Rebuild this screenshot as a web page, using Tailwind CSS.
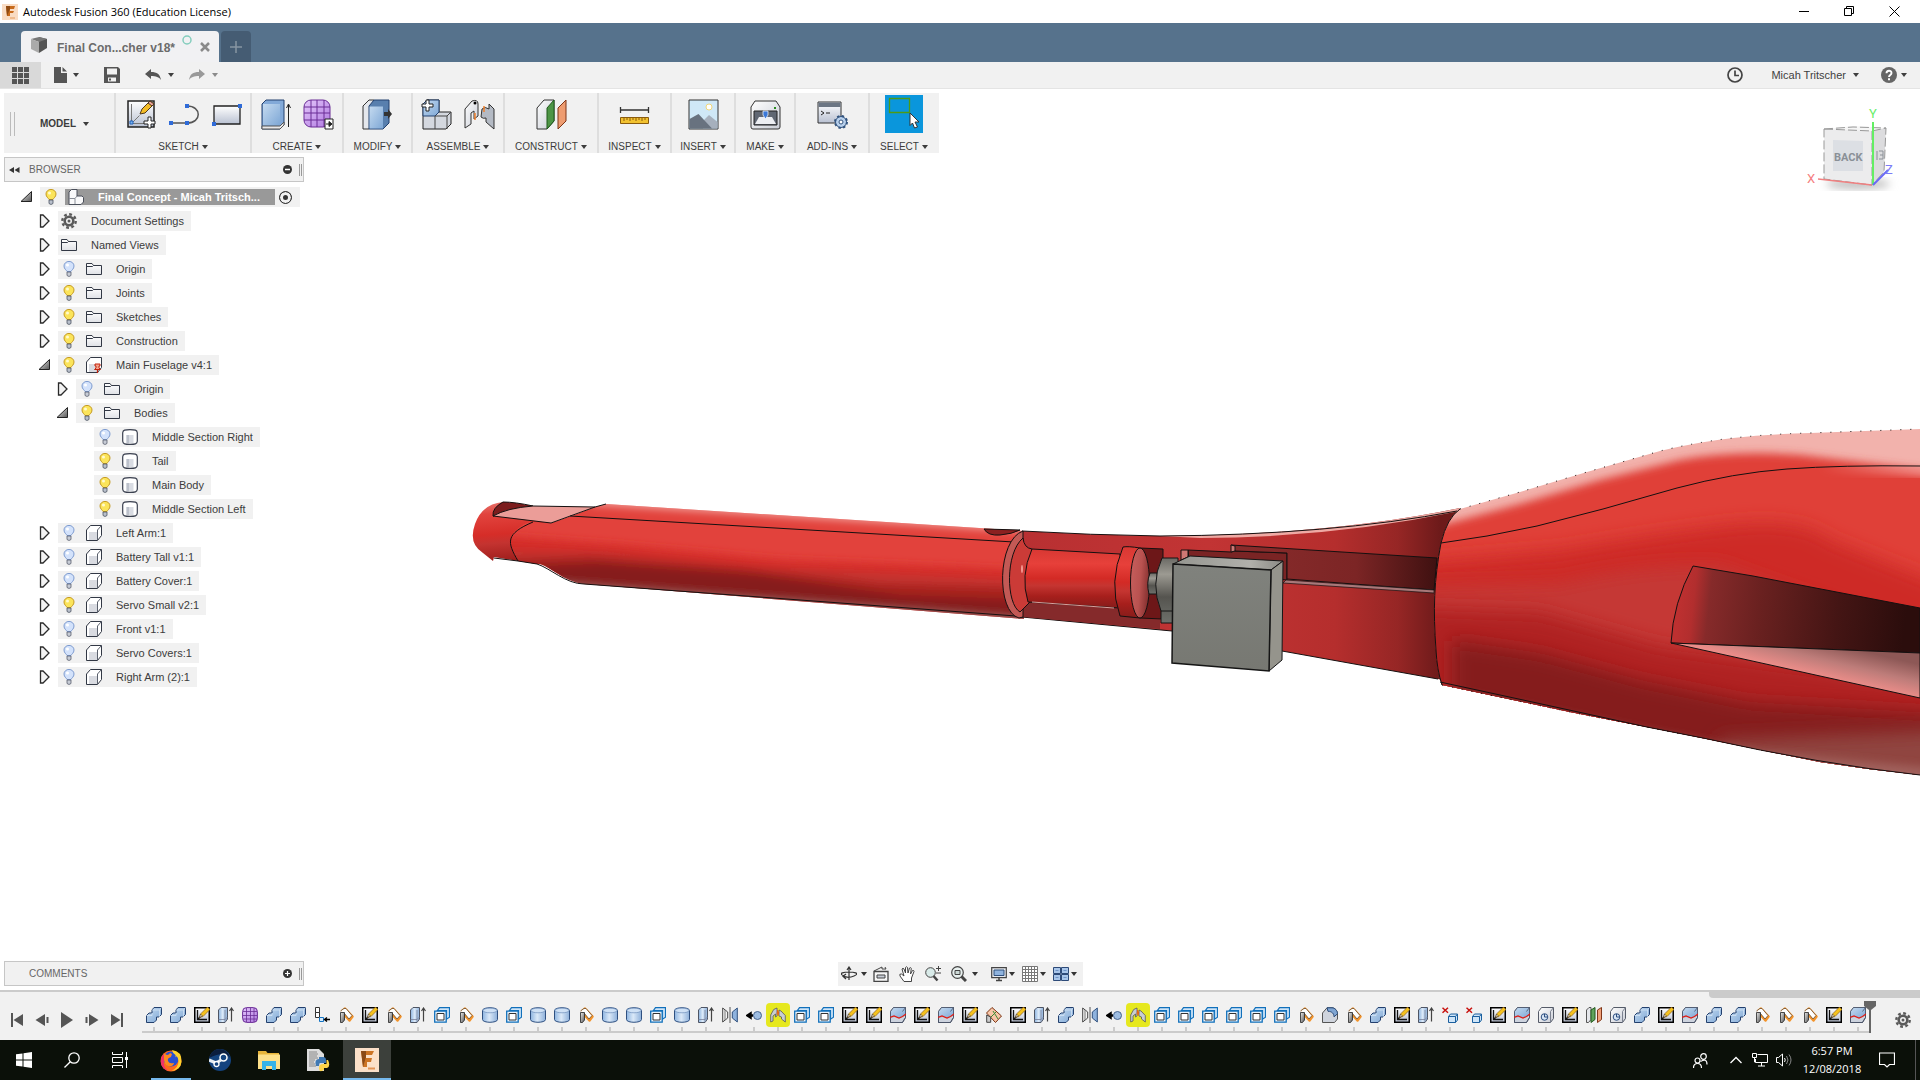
<!DOCTYPE html>
<html lang="en">
<head>
<meta charset="utf-8">
<title>Autodesk Fusion 360 (Education License)</title>
<script src="https://cdn.jsdelivr.net/npm/@tailwindcss/browser@4"></script>
</head>
<body class="flex h-screen flex-col overflow-hidden bg-white font-['Liberation_Sans',sans-serif] text-[11px] text-[#3c3c3c]">

<!-- Shared gradients and icon symbols -->
<svg class="absolute size-0" aria-hidden="true">
  <defs>
    <linearGradient id="blue" x1="0" y1="0" x2="1" y2="1"><stop offset="0" stop-color="#c4daf0"/><stop offset="1" stop-color="#7fa8d6"/></linearGradient>
    <linearGradient id="cyl"><stop offset="0" stop-color="#8db4e0"/><stop offset=".45" stop-color="#dbe9f8"/><stop offset="1" stop-color="#8db0da"/></linearGradient>
    <linearGradient id="grey" x1="0" y1="0" x2="1" y2="1"><stop offset="0" stop-color="#ffffff"/><stop offset="1" stop-color="#c9cdd6"/></linearGradient>
    <linearGradient id="sheet" x1="0" y1="0" x2="0" y2="1"><stop offset="0" stop-color="#ffffff"/><stop offset="1" stop-color="#b9c1d2"/></linearGradient>
    <linearGradient id="folder" x1="0" y1="0" x2="0" y2="1"><stop offset="0" stop-color="#ffffff"/><stop offset="1" stop-color="#dfe1e6"/></linearGradient>
    <linearGradient id="purp" x1="0" y1="0" x2="1" y2="1"><stop offset="0" stop-color="#e3c6fb"/><stop offset="1" stop-color="#b07ae0"/></linearGradient>
    <linearGradient id="dark" x1="0" y1="0" x2="1" y2="1"><stop offset="0" stop-color="#eee"/><stop offset="1" stop-color="#555"/></linearGradient>
  </defs>
  <symbol id="i-combine" viewBox="0 0 16 16"><path d="M6 3l2-2.500h7.500v7L13 10h-2.500v3L8 15.500H.5V8.500L3 6h3z" fill="url(#blue)" stroke="#23406e"/><path d="M6 3h7.500v7M.5 8.500H6V6M13.500 3l2-2.500" fill="none" stroke="#e3eefa" opacity=".6"/></symbol>
  <symbol id="i-sketch" viewBox="0 0 16 16"><path d="M.75.75h14.500v14.500H.75z" fill="url(#sheet)" stroke="#000" stroke-width="1.500"/><path d="M3.500 3v9.500H13M3.500 12.500L7 9" fill="none" stroke="#111" stroke-width="1.300"/><path d="M5.500 10.500l1-3.500 7-7L16 2.500l-7 7z" fill="#f5c21e" stroke="#7a4c10" stroke-width=".6"/><path d="M5.500 10.500l1-3.500 2 2z" fill="#f6dfb8" stroke="#222" stroke-width=".5"/></symbol>
  <symbol id="i-extrude" viewBox="0 0 16 16"><path d="M.5 3L3 .5h6.500V12L7 15.500H.5z" fill="url(#cyl)" stroke="#4e5564"/><path d="M.5 12.500H7L9.500 10M7 3v12" stroke="#77809a" fill="none" stroke-width=".8"/><path d="M13.500 14.500V2M11.500 4l2-3 2 3" fill="none" stroke="#444" stroke-width="1.200"/></symbol>
  <symbol id="i-tspline" viewBox="0 0 16 16"><rect x=".6" y=".6" width="14.800" height="14.800" rx="4" fill="url(#purp)" stroke="#6a2d96"/><path d="M1 4.500h14M1 8.500h14M1 12h14M4.500 1v14M8.500 1v14M12 1v14" stroke="#6a2d96" stroke-width=".8"/></symbol>
  <symbol id="i-align" viewBox="0 0 16 16"><path d="M1.500.5h4v5h-4zM1.500 5.500h4v5h-4z" fill="#fff" stroke="#333"/><path d="M5.500 10.500h4v4h-4z" fill="#d5eafc" stroke="#1474c4"/><path d="M11 12.500h5M13 10.500l-2.500 2 2.500 2" stroke="#000" stroke-width="1.400" fill="none"/></symbol>
  <symbol id="i-sweep" viewBox="0 0 16 16"><path d="M3.500 4.500L7 1.500l7.500 8-3 4-5-5.500" fill="none" stroke="#f3932a" stroke-width="2.500" stroke-linejoin="round"/><path d="M2.500 4L6 1.500h2l6 7-3 3.500-4.500-5.500" fill="#fff" stroke="#6b4a28" stroke-width=".8"/><path d="M2.500 5.500h4v7.500l-2 2.500H2.500z" fill="url(#dark)" stroke="#222" stroke-width=".8"/></symbol>
  <symbol id="i-pattern" viewBox="0 0 16 16"><path d="M5.500.7h10v9.500l-3 2V3.500h-9z" fill="#cfe5f8" stroke="#1170bb" stroke-width="1.200"/><path d="M.7 4.200h11.500v11H.7z" fill="#e8f3fd" stroke="#1170bb" stroke-width="1.300"/><path d="M3 6.500h7v6.500H3z" fill="#fff" stroke="#333"/></symbol>
  <symbol id="i-cyl" viewBox="0 0 16 16"><path d="M.5 3.500C.5-.2 15.500-.2 15.500 3.500v9c0 3.700-15 3.700-15 0z" fill="url(#cyl)" stroke="#2f5080"/><ellipse cx="8" cy="3.500" rx="7" ry="2.300" fill="#cfe1f5" stroke="#5c80b0" stroke-width=".6"/></symbol>
  <symbol id="i-mirror" viewBox="0 0 16 16"><path d="M.7 1l5 4v6l-5 4z" fill="#f4f4f4" stroke="#444"/><path d="M3 3v10" stroke="#777"/><path d="M15.300 1l-5 4v6l5 4z" fill="#8fb3de" stroke="#31527f"/><path d="M8 0v16" stroke="#555"/></symbol>
  <symbol id="i-rigid" viewBox="0 0 16 16"><path d="M7 8.500H3M4.500 6.500L1.500 8.500l3 2z" stroke="#000" stroke-width="2.500" fill="#000"/><circle cx="11.500" cy="8.500" r="4" fill="#9dbde3" stroke="#46648e"/></symbol>
  <symbol id="i-joint" viewBox="0 0 16 16"><path d="M.7 8l3-5.500L7 1v8l-1.500 1V7L3 9v5l-2.300 1z" fill="#c9cdd2" stroke="#55585e" stroke-width=".8"/><path d="M9 3l2 1 4.300 4.500V15L11.500 12V10L9 9z" fill="#c9cdd2" stroke="#55585e" stroke-width=".8"/><path d="M7.700 3l-.7 4.500M8.700 4.500l-.7 4" stroke="#ee5a10"/></symbol>
  <symbol id="i-split" viewBox="0 0 16 16"><path d="M.5 4.500l3-4h12v10l-3 5H.5z" fill="#cdd3de" stroke="#4a5367"/><path d="M.5 4.500l3-4h12v7L12.500 10l-4 1-3-1-5 1z" fill="url(#blue)"/><path d="M.5 4.500l3-4h12v10l-3 5H.5zM12.500 4.500l3-4" fill="none" stroke="#4a5367" stroke-width=".8"/><path d="M0 10.500l4-1.500 5 2 3.500-1.500L16 7" fill="none" stroke="#e21a10" stroke-width="1.200"/></symbol>
  <symbol id="i-fold" viewBox="0 0 16 16"><path d="M.5 6L6 .5 15.500 9l-6 6.500z" fill="#f8c6a8" stroke="#7a3312"/><path d="M.7 8l4 2v5.300h-4z" fill="#ccc" stroke="#444"/><path d="M5 10l5-5M7 4l5 8" stroke="#3c8a34"/></symbol>
  <symbol id="i-fillet" viewBox="0 0 16 16"><path d="M.5 6L5 .8h5c3 0 5.500 3 5.500 6V12l-3 3.500H.5z" fill="#cfd4dd" stroke="#555"/><path d="M5 .8h5c3 0 5.500 3 5.500 6l-3.500 3c0-3-2-5.500-6-5.500z" fill="#7fa5d3" stroke="#2a4a78"/></symbol>
  <symbol id="i-delete" viewBox="0 0 16 16"><path d="M.5.7l5.500 5M6 .7l-5.500 5" stroke="#c8120f" stroke-width="1.500"/><path d="M6.500 9.500l2-2.500h7v6l-2 2.500h-7z" fill="#cfe5f8" stroke="#1a5f9e"/><path d="M6.500 9.500h7v6M13.500 9.500l2-2.500" fill="none" stroke="#1a5f9e"/></symbol>
  <symbol id="i-hole" viewBox="0 0 16 16"><path d="M.5 4.500l3-4h12v11l-3 4H.5z" fill="url(#grey)" stroke="#555b68"/><path d="M12.500 4.500v11M12.500 4.500l3-4" fill="none" stroke="#7c8290"/><circle cx="6.500" cy="10" r="3.300" fill="#d7e5f5" stroke="#2e4f80"/><path d="M6.500 10V7M6.500 10h3" stroke="#2e4f80"/></symbol>
  <symbol id="i-plane" viewBox="0 0 16 16"><path d="M.5 3L3 .5h2v12L2.500 15.500h-2z" fill="#e5e7eb" stroke="#555"/><path d="M5 3l4-2.500v12L5 15.500z" fill="#5fa35a" stroke="#225a1e"/><path d="M11.500 3l4-2.500v12l-4 3z" fill="#f0a17a" stroke="#7f3517"/></symbol>

  <symbol id="i-bulb-on" viewBox="0 0 12 16"><path d="M4 10.500C3.500 9 1 8 1 5a5 4.600 0 0 1 10 0c0 3-2.500 4-3 5.500z" fill="#fbe45a" stroke="#c59a22"/><circle cx="4.500" cy="4" r="1.500" fill="#fffbd0"/><path d="M4 11h4v3.500L6 15.500 4 14.500z" fill="#b9c0cc" stroke="#4d5462" stroke-width=".8"/></symbol>
  <symbol id="i-bulb-off" viewBox="0 0 12 16"><path d="M4 10.500C3.500 9 1 8 1 5a5 4.600 0 0 1 10 0c0 3-2.500 4-3 5.500z" fill="#d3e2fb" stroke="#7d9bd0"/><circle cx="4.500" cy="4" r="1.500" fill="#fff"/><path d="M4 11h4v3.500L6 15.500 4 14.500z" fill="#c7ccd6" stroke="#5a6170" stroke-width=".8"/></symbol>
  <symbol id="i-folder" viewBox="0 0 16 16"><path d="M.5 13.500v-11h5.500l1.500 2h8v9z" fill="url(#folder)" stroke="#323845"/><path d="M1 5.500h5.500L7.500 4.500" fill="none" stroke="#323845"/></symbol>
  <symbol id="i-gear" viewBox="0 0 16 16"><circle cx="8" cy="8" r="4.300" fill="none" stroke="#5a5a5a" stroke-width="2.600"/><circle cx="8" cy="8" r="6.700" fill="none" stroke="#5a5a5a" stroke-width="2.400" stroke-dasharray="2.800 2.460"/><circle cx="8" cy="8" r="1.500" fill="#5a5a5a"/></symbol>
  <symbol id="i-part" viewBox="0 0 16 16"><path d="M.5 15.500V5l4-4.500h11v10l-4 5z" fill="#fff" stroke="#323845"/><path d="M3 7h8v8H3z" fill="#d9dbe1"/><path d="M11.500 5v10M11.500 5l4-4.500" fill="none" stroke="#5a606c"/></symbol>
  <symbol id="i-pinned" viewBox="0 0 16 16"><path d="M.5 15.500V5l4-4.500h11v10l-4 5z" fill="#fff" stroke="#323845"/><path d="M3 7h8v8H3z" fill="#d9dbe1"/><path d="M9 7h5v2h-1v2l1.500 1.500h-6L10 11V9H9z" fill="#f4a48c" stroke="#c3240f"/><path d="M11.500 12.500V16" stroke="#c3240f" stroke-width="1.300"/></symbol>
  <symbol id="i-body" viewBox="0 0 16 16"><path d="M.7 3.700C1 1 3 .7 8 .7s7 .3 7.300 3v8.600c-.3 2.700-2.300 3-7.300 3s-7-.3-7.300-3z" fill="#fff" stroke="#3b4150" stroke-width="1.200"/><path d="M4.500 6h7v8h-7z" fill="#d9dce3"/><path d="M4.500 6h2.500v8H4.500z" fill="#bcc1cb"/></symbol>
  <symbol id="i-asm" viewBox="0 0 16 16"><path d="M1 15V3l2.500-2.500H9V7h5l1.500 1.500V13L13 15.500H1z" fill="#f9f9fa" stroke="#4a4f5a"/><path d="M7 15V9.500L9 7M1 9.500h6" fill="none" stroke="#8a8f98"/></symbol>
  <symbol id="i-closed" viewBox="0 0 14 16"><path d="M3.500 2H6l6 6-6 6H3.500z" fill="#f3f3f3" stroke="#2a2a2a" stroke-width="1.300"/></symbol>
  <symbol id="i-open" viewBox="0 0 14 16"><path d="M12.500 2.500v10H2z" fill="url(#dark)" stroke="#222"/></symbol>
  <symbol id="i-caret" viewBox="0 0 6 4"><path d="M0 0h6L3 4z" fill="currentColor"/></symbol>
</svg>

<!-- Window title bar -->
<header class="flex h-[23px] shrink-0 items-center bg-white pr-[3px] text-black">
  <svg class="ml-[2px] size-4" viewBox="0 0 16 16"><path d="M0 0h16v16H0z" fill="#f9dcc4"/><path d="M4 2h9l-1 3H8v2h4l-1 2H8v3H5z" fill="#c76a1b"/><path d="M4 2h4v3L5 12z" fill="#8f4a12"/><path d="M8 14h5" stroke="#e59a5a"/></svg>
  <h1 class="ml-[5px] font-['Open_Sans',sans-serif] text-[11px] leading-4">Autodesk Fusion 360 (Education License)</h1>
  <div class="ml-auto flex">
    <button class="flex h-5 w-[45px] items-center justify-center" aria-label="Minimize"><svg class="size-[11px]" viewBox="0 0 11 11"><path d="M0 5.500h10" stroke="#000"/></svg></button>
    <button class="flex h-5 w-[45px] items-center justify-center" aria-label="Restore"><svg class="size-[11px]" viewBox="0 0 11 11"><path d="M.5 2.500h7v7h-7zM2.500 2.500v-2h7v7h-2" fill="none" stroke="#000"/></svg></button>
    <button class="flex h-5 w-[45px] items-center justify-center" aria-label="Close"><svg class="size-[11px]" viewBox="0 0 11 11"><path d="M.5.5l10 10M10.500.5l-10 10" stroke="#000"/></svg></button>
  </div>
</header>

<!-- Document tabs -->
<nav class="flex h-[39px] shrink-0 items-end gap-[2px] bg-[#56728c] pl-[21px]">
  <div class="flex h-[31px] w-[198px] items-center rounded-t bg-[#f1f1f3] pl-[10px]">
    <svg class="mb-1 size-4" viewBox="0 0 16 16"><path d="M8 0l8 2v9l-8 5z" fill="#555"/><path d="M0 2l8-2 8 2-8 3z" fill="#777"/><path d="M0 2l8 3v11L0 12z" fill="#aaa"/></svg>
    <a href="#" class="ml-[10px] pt-[2px] text-xs font-bold text-[#6b6b6b]">Final Con...cher v18*</a>
    <svg class="mb-[14px] ml-[7px] size-[10px]" viewBox="0 0 10 10"><circle cx="5" cy="5" r="4" fill="none" stroke="#84cdbd" stroke-width="1.500"/></svg>
    <button class="ml-auto mr-[9px]" aria-label="Close tab"><svg class="size-[10px]" viewBox="0 0 10 10"><path d="M1 1l8 8M9 1L1 9" stroke="#8a8a8a" stroke-width="2.500"/></svg></button>
  </div>
  <button class="flex h-[31px] w-[30px] items-center justify-center rounded-t bg-[#455c73]" aria-label="New tab"><svg class="size-3" viewBox="0 0 12 12"><path d="M6 0v12M0 6h12" stroke="#8795a3" stroke-width="1.500"/></svg></button>
</nav>

<!-- Quick access bar -->
<div class="flex h-[27px] shrink-0 items-center border-b border-[#e4e4e4] bg-[#f1f1f1] text-[#3f3f3f]">
  <button class="flex h-[26px] w-[41px] items-center justify-center bg-[#d9d9d9]" aria-label="Data panel"><svg class="size-[17px]" viewBox="0 0 17 17"><path d="M0 0h5v5H0zM6 0h5v5H6zM12 0h5v5h-5zM0 6h5v5H0zM6 6h5v5H6zM12 6h5v5h-5zM0 12h5v5H0zM6 12h5v5H6zM12 12h5v5h-5z" fill="#555"/></svg></button>
  <button class="ml-[13px] flex items-center gap-[6px]" aria-label="File"><svg class="h-4 w-[13px]" viewBox="0 0 13 16"><path d="M0 0h7v6h6v10H0zM8.500 0L13 4.500H8.500z" fill="#555"/></svg><svg class="h-1 w-[6px]"><use href="#i-caret"/></svg></button>
  <button class="ml-[25px]" aria-label="Save"><svg class="size-4" viewBox="0 0 16 16"><path d="M0 0h14l2 2v14H0z" fill="#555"/><path d="M3 1.500h10v6H3z" fill="#f1f1f1"/><path d="M4 10.500h8v4H4z" fill="#f1f1f1"/><path d="M5 11.500h2v2H5z" fill="#555"/></svg></button>
  <button class="ml-[25px] flex items-center gap-[7px]" aria-label="Undo"><svg class="h-3 w-4" viewBox="0 0 16 12"><path d="M0 5l6-5v3c6 0 9 2 10 8-2-3-5-4-10-4v3z" fill="#555"/></svg><svg class="h-1 w-[6px]"><use href="#i-caret"/></svg></button>
  <button class="ml-[15px] flex items-center gap-[7px] text-[#8a8a8a]" aria-label="Redo"><svg class="h-3 w-4" viewBox="0 0 16 12"><path d="M16 5l-6-5v3C4 3 1 5 0 11c2-3 5-4 10-4v3z" fill="#999"/></svg><svg class="h-1 w-[6px]"><use href="#i-caret"/></svg></button>
  <div class="ml-auto flex items-center pr-[13px]">
    <button aria-label="Job status"><svg class="size-4" viewBox="0 0 16 16"><circle cx="8" cy="8" r="7" fill="none" stroke="#444" stroke-width="1.700"/><path d="M8 3.500V8.500h4" fill="none" stroke="#444" stroke-width="1.700"/></svg></button>
    <button class="ml-7 flex items-center gap-[7px]">Micah Tritscher<svg class="h-1 w-[6px]"><use href="#i-caret"/></svg></button>
    <button class="ml-[22px] flex items-center gap-1" aria-label="Help"><svg class="size-4" viewBox="0 0 16 16"><circle cx="8" cy="8" r="8" fill="#666"/><path d="M5.500 6.200C5.500 3 10.500 3 10.500 6c0 2-2.500 1.800-2.500 4" fill="none" stroke="#fff" stroke-width="1.900"/><path d="M7 11.300h2v2H7z" fill="#fff"/></svg><svg class="h-1 w-[6px]"><use href="#i-caret"/></svg></button>
  </div>
</div>

<main class="relative flex min-h-0 flex-1 flex-col pl-1 pt-1">
  <!-- 3D viewport drawing -->
  <svg class="absolute inset-0 size-full" viewBox="0 89 1920 901" preserveAspectRatio="xMaxYMid slice" role="img" aria-label="Model viewport">
    <defs>
      <linearGradient id="nose" x1=".2" y1="0" x2=".3" y2="1"><stop offset="0" stop-color="#e6736c"/><stop offset=".2" stop-color="#e2443e"/><stop offset=".55" stop-color="#d62d28"/><stop offset=".7" stop-color="#c43330"/><stop offset="1" stop-color="#a01f1d"/></linearGradient>
      <linearGradient id="mid" gradientUnits="userSpaceOnUse" x1="1020" y1="0" x2="1440" y2="0"><stop offset="0" stop-color="#b83032"/><stop offset=".45" stop-color="#c23434"/><stop offset=".75" stop-color="#b52e2d"/><stop offset=".9" stop-color="#962625"/><stop offset="1" stop-color="#6d1a1a"/></linearGradient>
      <linearGradient id="slot" gradientUnits="userSpaceOnUse" x1="1230" y1="0" x2="1440" y2="0"><stop offset="0" stop-color="#8a2c2c"/><stop offset=".6" stop-color="#7c2525"/><stop offset="1" stop-color="#3d1010"/></linearGradient>
      <linearGradient id="rod" x1="0" y1="0" x2="0" y2="1"><stop offset="0" stop-color="#d83833"/><stop offset=".25" stop-color="#e7403a"/><stop offset=".5" stop-color="#d32a25"/><stop offset=".62" stop-color="#c53531"/><stop offset=".8" stop-color="#a71f1c"/><stop offset="1" stop-color="#861c1a"/></linearGradient>
      <linearGradient id="disk" x1="0" y1="0" x2="1" y2=".3"><stop offset="0" stop-color="#c8605e"/><stop offset=".6" stop-color="#b95250"/><stop offset="1" stop-color="#8b3433"/></linearGradient>
      <linearGradient id="metal" x1="0" y1="0" x2="0" y2="1"><stop offset="0" stop-color="#6b6a65"/><stop offset=".25" stop-color="#9c9a92"/><stop offset=".6" stop-color="#55544f"/><stop offset="1" stop-color="#6e706b"/></linearGradient>
      <linearGradient id="boxf" x1="0" y1="0" x2="0" y2="1"><stop offset="0" stop-color="#80827d"/><stop offset="1" stop-color="#777872"/></linearGradient>
      <linearGradient id="boxt"><stop offset="0" stop-color="#94958f"/><stop offset=".7" stop-color="#b1b0ab"/><stop offset="1" stop-color="#8a8a85"/></linearGradient>
      <linearGradient id="cut" gradientUnits="userSpaceOnUse" x1="1680" y1="600" x2="1905" y2="625"><stop offset="0" stop-color="#bd3030"/><stop offset=".06" stop-color="#b22e2e"/><stop offset=".13" stop-color="#862a2a"/><stop offset=".35" stop-color="#6a2120"/><stop offset=".7" stop-color="#441514"/><stop offset="1" stop-color="#2b0d0c"/></linearGradient>
      <linearGradient id="lip" gradientUnits="userSpaceOnUse" x1="1850" y1="648" x2="1842" y2="682"><stop offset="0" stop-color="#8d5856"/><stop offset=".5" stop-color="#bd7c79"/><stop offset="1" stop-color="#ee8e8a"/></linearGradient>
      <clipPath id="hull"><path d="M1460 509L1520 492 1587 472 1660 451Q1697 442 1733 438T1810 433L1920 429V775Q1870 770 1820 762L1687 735 1570 712 1442 685Q1437 670 1436 650C1433 610 1434 580 1441 543Q1447 518 1460 509z"/></clipPath>
      <clipPath id="tailc"><path d="M518 561Q505 541 515 531T533 522L551 523Q575 515 595 507L606 504 1024 531V619L584 584Q570 582 555 572T537 564z"/></clipPath>
      <filter id="b4" x="-20%" y="-20%" width="140%" height="140%"><feGaussianBlur stdDeviation="4"/></filter>
      <filter id="b9" x="-20%" y="-20%" width="140%" height="140%"><feGaussianBlur stdDeviation="9"/></filter>
    </defs>

    <!-- nose -->
    <path d="M503 502Q482 504 475 524T483 553L493 561 494 557 518 561 551 523 533 506z" fill="url(#nose)"/>
    <!-- tail body, shaded along its slope -->
    <g clip-path="url(#tailc)">
      <path d="M500 490H1030V640H500z" fill="#e2423c"/>
      <g filter="url(#b4)">
        <path d="M590 497L1040 526V532L590 504z" fill="#f6b8b2"/>
        <path d="M480 535L620 545 780 560 1040 571V660H480z" fill="#d42a25"/>
        <path d="M480 550L600 552 760 567 1040 581V660H480z" fill="#c43431"/>
        <path d="M480 560L590 556 740 567 880 583 1040 588V660H480z" fill="#a9211e"/>
        <path d="M530 566L600 563 760 575 900 595 1040 600V650H530z" fill="#861e1c"/>
        <path d="M560 583L1040 619V640H560z" fill="#a36360"/>
      </g>
    </g>
    <g fill="none" stroke="#151010" stroke-width="1">
      <path d="M493 516Q492 508 503 502 515 502 533 506L493 516z" fill="#7c1d1d"/>
      <path d="M493 516Q507 508 533 506L595 507 551 523z" fill="#eb9d98"/>
      <path d="M595 507L606 504M533 522C505 534 507 542 518 561M494 558L518 561 537 564C550 568 566 584 584 584L1016 616M570 516L1014 542"/>
    </g>
    <path d="M984 529Q988 536 1000 535T1020 530z" fill="#8b2020" stroke="#151010"/>

    <!-- mid section -->
    <path d="M1022 531Q1090 535 1160 536 1330 535 1460 508L1450 682 1438 679 1282 651 1172 631 1022 617z" fill="url(#mid)"/>
    <path d="M1160 536Q1330 535 1460 508V511Q1330 538 1200 538z" fill="#efaaa4"/>
    <path d="M1022 531Q1090 535 1160 536 1330 535 1457 511" fill="none" stroke="#151010"/>
    <path d="M1022 617L1172 631M1282 651L1438 679" stroke="#151010"/>
    <path d="M1023 600L1115 606 1140 618 1160 619V629L1023 617z" fill="#852a2b"/>
    <path d="M1140 548L1163 549V619L1140 618z" fill="#6d1718" stroke="#151010"/>
    <g stroke="#151010">
      <path d="M1188 550L1231 552 1235 551 1287 553V580L1190 570z" fill="#7a2424"/>
      <path d="M1231 545L1437 558 1434 590 1287 579V553L1235 551z" fill="url(#slot)"/>
      <path d="M1181 550H1188V557L1181 560zM1231 545L1235 546V551L1231 552z" fill="#d07875"/>
      <path d="M1286 580L1434 590V593L1283 583z" fill="#a97879" stroke-width=".7"/>
    </g>

    <!-- coupling ring, rod and disk -->
    <g stroke="#151010">
      <path d="M1023 531C997 540 996 612 1019 618L1023 617z" fill="#c35955"/>
      <path d="M1023 538C1005 553 1006 604 1020 612L1030 602 1032 549Q1024 548 1023 538z" fill="#cb3b37"/>
      <path d="M1032 549L1120 554V608L1028 602Q1020 576 1032 549z" fill="url(#rod)"/>
      <path d="M1123 547Q1128 546 1140 548V618L1120 616Q1108 582 1123 547z" fill="url(#rod)"/>
      <ellipse cx="1140" cy="583" rx="9.500" ry="35" fill="url(#disk)"/>
    </g>
    <path d="M1032 602L1114 608" stroke="#d9a09c"/>
    <ellipse cx="1022" cy="569" rx="1" ry="4" fill="#f59a94"/>

    <!-- servo -->
    <g stroke="#151515">
      <path d="M1150 573H1157V594H1149Q1146 583 1150 573z" fill="url(#metal)"/>
      <path d="M1162 558H1178V623H1161V611Q1150 584 1162 558z" fill="url(#metal)"/>
      <path d="M1161 611H1174" />
      <path d="M1173 564L1190 556 1283 561 1271 570z" fill="url(#boxt)"/>
      <path d="M1271 570L1283 561 1282 660 1269 671z" fill="#95948c"/>
      <path d="M1173 564L1271 570 1269 671 1172 663z" fill="url(#boxf)" stroke-width="1.500"/>
    </g>

    <!-- fuselage -->
    <g clip-path="url(#hull)">
      <path d="M1420 420H1920V790H1420z" fill="#f2b2ac"/>
      <path d="M1400 536L1520 504 1600 480 1680 460Q1733 450 1800 455L1960 474V820H1400z" fill="#e03f39" filter="url(#b4)"/>
      <path d="M1390 565L1560 550Q1640 536 1720 526T1830 540L1980 600V840H1390z" fill="#ce2925" filter="url(#b9)"/>
      <path d="M1390 588L1560 583Q1640 564 1720 566L1980 660V840H1390z" fill="#c53735" filter="url(#b9)"/>
      <path d="M1390 606L1540 612 1660 646 1980 690V850H1390z" fill="#b02220" filter="url(#b9)"/>
      <path d="M1452 640L1540 653 1640 680 1750 702 1980 716V850H1452z" fill="#851d1b" filter="url(#b9)"/>
      <path d="M1720 740L1980 728V850H1720z" fill="#904441" filter="url(#b9)"/>
      <path d="M1430 687L1640 730 1760 752 1980 772V850H1430z" fill="#a0605c" filter="url(#b4)"/>
      <path d="M1820 468H1940V476z" fill="#f59a95" filter="url(#b4)"/>
    </g>
    <g fill="none" stroke="#151010">
      <path d="M1460 509Q1447 518 1441 543C1434 580 1433 610 1436 650Q1437 670 1442 685"/>
      <path d="M1441 543L1487 536 1537 526 1603 509 1677 488Q1733 473 1787 469T1920 466"/>
      <path d="M1440 682L1537 703 1647 727 1703 738Q1820 764 1920 775"/>
      <path d="M1460 509L1520 492 1587 472 1660 451Q1697 442 1733 438T1810 433L1920 429M1442 685L1570 712 1687 735" stroke-dasharray="1 9"/>
      <path d="M1693 566L1753 576 1920 608V653L1671 643Q1673 603 1693 566z" fill="url(#cut)"/>
      <path d="M1671 643L1920 653V698L1820 676z" fill="url(#lip)"/>
    </g>

    <!-- view cube -->
    <ellipse cx="1858" cy="184" rx="32" ry="5" fill="#bbb" filter="url(#b4)"/>
    <path d="M1824 129L1853 126 1886 128 1872 131z" fill="#f6f6f6"/>
    <path d="M1824 129L1872 131V185L1824 179z" fill="#ececed"/>
    <path d="M1872 131L1886 128 1884 172 1872 185z" fill="#dcdcde"/>
    <path d="M1833 140L1863 141V171L1833 171z" fill="#dcdfe4"/>
    <path d="M1824 129L1872 131V185L1824 179zM1872 131L1886 128 1884 172 1872 185M1824 129L1853 127 1886 128" fill="none" stroke="#999" stroke-dasharray="9 3"/>
    <text x="1834" y="161" font-family="Roboto, sans-serif" font-size="11" font-weight="700" fill="#8a9097">BACK</text>
    <path d="M1877 151v9M1879 151h4v8h-4M1880 155h3" stroke="#8a9097" fill="none"/>
    <path d="M1818 179L1872 185" stroke="#f08080" stroke-width="1.500"/>
    <path d="M1873 185V122" stroke="#63ee63" stroke-width="2"/>
    <path d="M1873 185L1888 170" stroke="#6a6af5" stroke-width="2"/>
    <text x="1807" y="183" font-family="Roboto, sans-serif" font-size="13" fill="#f58080">X</text>
    <text x="1869" y="118" font-family="Roboto, sans-serif" font-size="13" fill="#6aee6a">Y</text>
    <text x="1885" y="174" font-family="Roboto, sans-serif" font-size="13" fill="#7c7cf8">Z</text>
  </svg>

  <!-- Tool ribbon -->
  <div class="relative flex h-[60px] w-[935px] shrink-0 bg-[#f1f1f1] text-[10px] leading-3">
    <div class="flex w-[110px] items-center pl-[6px] pt-[2px]">
      <div class="h-6 w-[5px] border-x border-[#bbb]"></div>
      <button class="ml-[25px] flex items-center gap-[7px] font-bold">MODEL<svg class="h-1 w-[6px]"><use href="#i-caret"/></svg></button>
    </div>
    <section class="flex w-[136px] flex-col items-center border-l-2 border-[#dedede]">
      <div class="flex h-[48px] w-full items-center justify-between pb-[6px] pl-[10px] pr-2">
        <svg class="size-[30px]" viewBox="0 0 30 30"><path d="M2 2h26v26H2z" fill="url(#sheet)" stroke="#222" stroke-width="1.500"/><path d="M5.500 5v19.500H20M5.500 24.500l8-8" fill="none" stroke="#777"/><path d="M4 22h3v3H4z" fill="#7db4ef" stroke="#2160b8"/><path d="M14 15l2-5 8-8 4 3-9 9z" fill="#f3bd27" stroke="#51381a"/><path d="M22 4l2-2 4 3-2 2z" fill="#e8a29a" stroke="#51381a"/><path d="M22 18h3v4h4v3h-4v4h-3v-4h-4v-3h4z" fill="#fff" stroke="#222"/></svg>
        <svg class="size-[30px]" viewBox="0 0 30 30"><path d="M2 24h16c15 0 15-17 0-17" fill="none" stroke="#555" stroke-width="1.500"/><path d="M0 22h4v4H0zM16 22h4v4h-4zM16 5h4v4h-4z" fill="#2f6bd8"/></svg>
        <svg class="size-[30px]" viewBox="0 0 30 30"><path d="M2 7h26v18H2z" fill="url(#sheet)" stroke="#222" stroke-width="1.300"/><path d="M0 23h4v4H0zM26 5h4v4h-4z" fill="#2f6bd8"/></svg>
      </div>
      <button class="flex items-center gap-[3px]">SKETCH<svg class="h-1 w-[6px]"><use href="#i-caret"/></svg></button>
    </section>
    <section class="flex w-[92px] flex-col items-center border-l-2 border-[#dedede]">
      <div class="flex h-[48px] w-full items-center justify-between pb-[6px] pl-[9px] pr-2">
        <svg class="size-[31px]" viewBox="0 0 31 31"><path d="M1 5l4-4h18v25l-4 4H1z" fill="#82a9d8" stroke="#23406e"/><path d="M2 5h17v21H2z" fill="url(#blue)"/><path d="M1 27h18l4-4v3l-4 4H1z" fill="#e8e8ea" stroke="#555"/><path d="M27.500 28V6M25.500 9l2-4 2 4" fill="none" stroke="#222"/></svg>
        <svg class="size-[31px]" viewBox="0 0 31 31"><rect x="1" y="1" width="26" height="27" rx="7" fill="url(#purp)" stroke="#6a2d96"/><path d="M1 8h26M1 14h26M1 21h26M8 1v27M14 1v27M21 1v27" stroke="#6a2d96"/><path d="M22 20h8v10h-8z" fill="#fff" stroke="#222"/><path d="M23 25h3M26 22.500l3 2.500-3 2.500z" stroke="#222" fill="#222"/></svg>
      </div>
      <button class="flex items-center gap-[3px]">CREATE<svg class="h-1 w-[6px]"><use href="#i-caret"/></svg></button>
    </section>
    <section class="flex w-[69px] flex-col items-center border-l-2 border-[#dedede]">
      <div class="flex h-[48px] items-center pb-[6px]"><svg class="size-[31px]" viewBox="0 0 31 31"><path d="M1 7l6-6h5v23l-5 6H1z" fill="#e4e7ec" stroke="#333"/><path d="M7 7l5-6h15v23l-6 6H7z" fill="#587fae" stroke="#23406e"/><path d="M7.500 7.500H21V29.500H7.500z" fill="url(#blue)"/><path d="M22 13h4v-3l4 5-4 5v-3h-4z" fill="#333"/></svg></div>
      <button class="flex items-center gap-[3px]">MODIFY<svg class="h-1 w-[6px]"><use href="#i-caret"/></svg></button>
    </section>
    <section class="flex w-[92px] flex-col items-center border-l-2 border-[#dedede]">
      <div class="flex h-[48px] w-full items-center justify-between pb-[6px] pl-2 pr-2">
        <svg class="size-[31px]" viewBox="0 0 31 31"><path d="M2 5l4-4h12v12h12v12l-5 5H2z" fill="#d4d8df" stroke="#222"/><path d="M2 5l4-4h12v12l-4 4H2z" fill="url(#blue)" stroke="#23406e"/><path d="M14 17v13M14 17h12l4-4M26 17v13" fill="none" stroke="#444"/><path d="M5 1h3v4h4v3H8v4H5V8H1V5h4z" fill="#fff" stroke="#222"/></svg>
        <svg class="size-[31px]" viewBox="0 0 31 31"><path d="M1 10l7-8q6-2 6 3v12l-4 3V12L7 14v11l-6 4z" fill="url(#grey)" stroke="#333"/><path d="M18 10q3-3 7 0L25 5l5 5v20l-8-7v-4q-3 1-5-1z" fill="#b4bac4" stroke="#333"/><path d="M11 14v7M20 7v6" stroke="#f1802b" stroke-width="1.500"/><circle cx="11" cy="4" r="1.500"/></svg>
      </div>
      <button class="flex items-center gap-[3px]">ASSEMBLE<svg class="h-1 w-[6px]"><use href="#i-caret"/></svg></button>
    </section>
    <section class="flex w-[94px] flex-col items-center border-l-2 border-[#dedede]">
      <div class="flex h-[48px] items-center pb-[6px]"><svg class="size-[31px]" viewBox="0 0 31 31"><path d="M1 9l7-8h10v21l-7 8H1z" fill="url(#grey)" stroke="#333"/><path d="M11 9l7-8v21l-7 8z" fill="#4d9546" stroke="#1f5a1b"/><path d="M22 9l8-8v21l-8 8z" fill="#ee9c70" stroke="#7f3517"/></svg></div>
      <button class="flex items-center gap-[3px]">CONSTRUCT<svg class="h-1 w-[6px]"><use href="#i-caret"/></svg></button>
    </section>
    <section class="flex w-[73px] flex-col items-center border-l-2 border-[#dedede]">
      <div class="flex h-[48px] items-center pb-[6px]"><svg class="size-[31px]" viewBox="0 0 31 31"><path d="M1.500 11h28M1.500 8v6M29.500 8v6" stroke="#333" stroke-width="1.300"/><path d="M1.500 18.500h28v6h-28z" fill="#f2c230" stroke="#8a5b0c"/><path d="M5 19v3M8 19v2M11 19v3M14 19v2M17 19v3M20 19v2M23 19v3M26 19v2" stroke="#8a5b0c"/></svg></div>
      <button class="flex items-center gap-[3px]">INSPECT<svg class="h-1 w-[6px]"><use href="#i-caret"/></svg></button>
    </section>
    <section class="flex w-[64px] flex-col items-center border-l-2 border-[#dedede]">
      <div class="flex h-[48px] items-center pb-[6px]"><svg class="size-[31px]" viewBox="0 0 31 31"><path d="M1 1h29v29H1z" fill="#cfe8f7" stroke="#333"/><circle cx="21" cy="8" r="3" fill="#fff" stroke="#f0d77a"/><path d="M15 22l6-6 8.500 7v6.500H15z" fill="#a6b0bd"/><path d="M1.500 20l9-5L24 29.500H1.500z" fill="#68727f"/></svg></div>
      <button class="flex items-center gap-[3px]">INSERT<svg class="h-1 w-[6px]"><use href="#i-caret"/></svg></button>
    </section>
    <section class="flex w-[60px] flex-col items-center border-l-2 border-[#dedede]">
      <div class="flex h-[48px] items-center pb-[6px]"><svg class="size-[31px]" viewBox="0 0 31 31"><path d="M1 8l4-6h21l4 6v20q0 2-2 2H3q-2 0-2-2z" fill="url(#grey)" stroke="#333"/><path d="M4 12h23v14H4z" fill="#606773" stroke="#222"/><path d="M9 18h13l4 7H5z" fill="#eceef2"/><path d="M13 12h5v4l-2.500 4-2.500-4z" fill="#3a78d8" stroke="#fff" stroke-width=".7"/><path d="M24 8h2v2h-2z" fill="#278a1c"/></svg></div>
      <button class="flex items-center gap-[3px]">MAKE<svg class="h-1 w-[6px]"><use href="#i-caret"/></svg></button>
    </section>
    <section class="flex w-[74px] flex-col items-center border-l-2 border-[#dedede]">
      <div class="flex h-[48px] items-center pb-[6px]"><svg class="size-[31px]" viewBox="0 0 31 31"><path d="M1 3h23v21H1z" fill="url(#sheet)" stroke="#333"/><path d="M1.500 3.500h22V8h-22z" fill="#6b7583"/><path d="M4 12l3 2-3 2M9 14h4" fill="none" stroke="#222"/><circle cx="24" cy="23" r="5.500" fill="#b8d0ec" stroke="#33547f"/><circle cx="24" cy="23" r="6" fill="none" stroke="#33547f" stroke-width="2" stroke-dasharray="2.400 2.310"/><circle cx="24" cy="23" r="2" fill="#fff" stroke="#33547f"/></svg></div>
      <button class="flex items-center gap-[3px]">ADD-INS<svg class="h-1 w-[6px]"><use href="#i-caret"/></svg></button>
    </section>
    <section class="flex w-[70px] flex-col items-center border-l-2 border-[#dedede]">
      <div class="flex h-[48px] items-center pb-[6px]"><svg class="size-[38px] bg-[#0a96dc]" viewBox="0 0 38 38"><path d="M4.500 3.500h20v14h-20z" fill="none" stroke="#4f9a14" stroke-width="1.300"/><path d="M25 18l9 9h-4l2.500 5-3 1-2-5-2.500 2.500z" fill="#fff" stroke="#333"/></svg></div>
      <button class="flex items-center gap-[3px]">SELECT<svg class="h-1 w-[6px]"><use href="#i-caret"/></svg></button>
    </section>
  </div>

  <!-- Browser panel -->
  <aside class="relative mt-1 w-[300px]">
    <div class="flex h-[25px] items-center border border-[#c6c6c6] bg-[#f1f1f1] text-[10px]">
      <button class="ml-1 w-[11px]" aria-label="Collapse browser"><svg class="h-[6px] w-[11px]" viewBox="0 0 11 6"><path d="M5 0v6L0 3zM10.500 0v6l-5-3z" fill="#333"/></svg></button>
      <h2 class="ml-[9px] text-[#666]">BROWSER</h2>
      <button class="ml-auto" aria-label="Hide all"><svg class="size-[9px]" viewBox="0 0 9 9"><circle cx="4.500" cy="4.500" r="4.500" fill="#333"/><path d="M2 4.500h5" stroke="#fff" stroke-width="1.500"/></svg></button>
      <div class="ml-[7px] mr-px h-3 w-[3px] border-x border-[#999]"></div>
    </div>
    <ul id="tree" class="mt-[5px] flex flex-col gap-1"></ul>
  </aside>

  <!-- Bottom of the viewport: comments and navigation bar -->
  <div class="relative mt-auto flex items-end pb-1">
    <div class="flex h-[25px] w-[300px] items-center border border-[#c6c6c6] bg-[#f1f1f1] pl-6 text-[10px] text-[#666]">
      <h2>COMMENTS</h2>
      <button class="ml-auto" aria-label="Add comment"><svg class="size-[9px]" viewBox="0 0 9 9"><circle cx="4.500" cy="4.500" r="4.500" fill="#333"/><path d="M2 4.500h5M4.500 2v5" stroke="#fff" stroke-width="1.200"/></svg></button>
      <div class="ml-[7px] mr-px h-3 w-[3px] border-x border-[#999]"></div>
    </div>
    <div class="flex flex-1 justify-center pr-[304px]">
      <div class="flex h-6 w-[245px] items-center bg-[#f1f1f1] pl-[3px] text-[#333]">
        <button class="flex items-center gap-1" aria-label="Orbit"><svg class="size-4" viewBox="0 0 16 16"><path d="M3 10C-4 7 4 6 8 6s12 1 5 4-7 .5-11 .3M5 8l-3 2.300L5 13M8 14V2M6 4l2-3 2 3" fill="none" stroke="#333" stroke-width="1.200"/></svg><svg class="h-1 w-[6px]"><use href="#i-caret"/></svg></button>
        <button class="ml-[6px]" aria-label="Look at"><svg class="size-4" viewBox="0 0 16 16"><path d="M1 5.500h14v10H1z" fill="#f7f7f7" stroke="#444" stroke-width="1.300"/><path d="M4 9h8v3H4z" fill="#c8ced8" stroke="#444"/><path d="M1 5l8-4v2h4L12 1" fill="none" stroke="#444"/></svg></button>
        <button class="ml-[10px]" aria-label="Pan"><svg class="size-4" viewBox="0 0 16 16"><path d="M5 15.500L1 10Q0 7.500 2.500 8L5 10 3 3q1-1.500 2 0l1.500 4L6.500 1.500q1-1.500 2 0L9 7l1.500-5q1.500-1 1.800.5L11.500 8l2-3.500q1.500-.5 1.500 1L12.500 12v3.500z" fill="#fff" stroke="#444"/></svg></button>
        <button class="ml-[10px]" aria-label="Zoom"><svg class="size-4" viewBox="0 0 16 16"><circle cx="5.500" cy="6.500" r="4.800" fill="#d9ebe9" stroke="#444"/><path d="M8.500 10l4 4.500" stroke="#444" stroke-width="2.500"/><path d="M13.500 0v5M11 2.500h5M11 7h5" stroke="#444"/></svg></button>
        <button class="ml-[10px] flex items-center gap-[5px]" aria-label="Fit"><svg class="size-4" viewBox="0 0 16 16"><circle cx="6.500" cy="6.500" r="5.800" fill="#e8f0ef" stroke="#444" stroke-width="1.200"/><path d="M4 4.500h5v4H4z" fill="#cbd8d6" stroke="#444"/><path d="M10.500 10.500l4.500 4.500" stroke="#444" stroke-width="3"/></svg><svg class="h-1 w-[6px]"><use href="#i-caret"/></svg></button>
        <button class="ml-[13px] flex items-center gap-[2px]" aria-label="Display settings"><svg class="size-4" viewBox="0 0 16 16"><path d="M.7 1.700h14.600v10H.7z" fill="#e6e9ee" stroke="#444" stroke-width="1.200"/><path d="M3 4h10v5.500H3z" fill="#8fb3de" stroke="#31527f"/><path d="M5 14.500h6M8 12v2.500" stroke="#444" stroke-width="1.500"/></svg><svg class="h-1 w-[6px]"><use href="#i-caret"/></svg></button>
        <button class="ml-[7px] flex items-center gap-[2px]" aria-label="Grid and snaps"><svg class="size-4" viewBox="0 0 16 16"><path d="M.5.5h15v15H.5zM.5 3.500h15M.5 6.500h15M.5 9.500h15M.5 12.500h15M3.500.5v15M6.500.5v15M9.500.5v15M12.500.5v15" fill="#fff" stroke="#777"/></svg><svg class="h-1 w-[6px]"><use href="#i-caret"/></svg></button>
        <button class="ml-[7px] flex items-center gap-[2px]" aria-label="Viewports"><svg class="size-4" viewBox="0 0 16 16"><path d="M.5 1.500h7v6h-7zM8.500 1.500h7v6h-7zM.5 8.500h7v6h-7zM8.500 8.500h7v6h-7z" fill="#a9c6ea" stroke="#2d4a78"/><path d="M2.500 4.500h3M10.500 4.500h3M2.500 11.500h3M10.500 11.500h3" stroke="#6f93c6"/></svg><svg class="h-1 w-[6px]"><use href="#i-caret"/></svg></button>
      </div>
    </div>
  </div>
</main>

<!-- Design timeline -->
<section class="relative flex h-[50px] shrink-0 border-t-2 border-[#cbcbcb] bg-[#f1f1f1]">
  <div class="absolute right-0 top-[-2px] h-2 w-[211px] rounded-bl bg-[#cbcbcb]"></div>
  <div class="flex w-[142px] shrink-0 items-center pl-1 pt-2">
    <button class="flex w-[25px] justify-center" aria-label="Go to start"><svg class="size-[14px]" viewBox="0 0 14 14"><path d="M1 0h2v14H1zM13 1v12L3.500 7z" fill="#555"/></svg></button>
    <button class="flex w-[25px] justify-center" aria-label="Step back"><svg class="size-[14px]" viewBox="0 0 14 14"><path d="M10 1v12L.5 7zM11.500 4h2v6h-2z" fill="#555"/></svg></button>
    <button class="flex w-[25px] justify-center" aria-label="Play"><svg class="h-4 w-3" viewBox="0 0 12 16"><path d="M0 0l12 8-12 8z" fill="#555"/></svg></button>
    <button class="flex w-[25px] justify-center" aria-label="Step forward"><svg class="size-[14px]" viewBox="0 0 14 14"><path d="M4 1v12l9.500-6zM.5 4h2v6h-2z" fill="#555"/></svg></button>
    <button class="flex w-[25px] justify-center" aria-label="Go to end"><svg class="size-[14px]" viewBox="0 0 14 14"><path d="M11 0h2v14h-2zM1 1v12l9.500-6z" fill="#555"/></svg></button>
  </div>
  <div class="relative flex min-w-0">
    <ol id="timeline" class="flex min-w-0 overflow-hidden pt-[11px]"></ol>
    <svg class="absolute right-[-6px] top-[9px] h-8 w-3" viewBox="0 0 12 32"><path d="M0 0h12v5L7 9v23H5V9L0 5z" fill="#666"/></svg>
  </div>
  <button class="ml-auto mr-[9px] mt-2 shrink-0" aria-label="Timeline settings"><svg class="size-4"><use href="#i-gear"/></svg></button>
</section>

<!-- Windows taskbar -->
<footer class="flex h-10 shrink-0 items-center bg-[#0b1009] text-white">
  <button class="flex h-10 w-12 items-center justify-center" aria-label="Start"><svg class="size-4" viewBox="0 0 16 16"><path d="M0 2.300l6.500-.9v6.100H0zM7.500 1.200L16 0v7.500H7.500zM0 8.500h6.500v6.100L0 13.700zM7.500 8.500H16V16l-8.500-1.200z" fill="#fff"/></svg></button>
  <button class="flex h-10 w-12 items-center justify-center" aria-label="Search"><svg class="size-4" viewBox="0 0 16 16"><circle cx="10" cy="6" r="5.200" fill="none" stroke="#fff" stroke-width="1.300"/><path d="M6.300 9.700L.5 15.500" stroke="#fff" stroke-width="1.300"/></svg></button>
  <button class="flex h-10 w-12 items-center justify-center" aria-label="Task view"><svg class="size-4" viewBox="0 0 16 16"><path d="M.5 0v2.500h10V0M.5 5.500h10v5H.5zM.5 16v-2.500h10V16M14.500 0v16" fill="none" stroke="#fff"/><path d="M13 5h3v3h-3z" fill="#fff"/></svg></button>
  <button class="ml-[3px] flex h-10 w-12 flex-col items-center" aria-label="Firefox"><svg class="mt-2 size-6 shrink-0" viewBox="0 0 24 24"><circle cx="12" cy="13" r="10.500" fill="#ff6a1c"/><circle cx="12" cy="11" r="7.500" fill="#2a4fd0"/><path d="M5 6q2 0 3 1 2 0 3-2l2 1-1 3q-4 1-3 4t6 2q-1 4-6 3T5 6z" fill="#ff8a1e"/><path d="M13 2q10 1 9.500 12-1 8-10 9 7-3 7-10 0-3-2-5-1 3-1-1-3-2-3.500-5z" fill="#ffd22e"/><path d="M3 8q-4 12 7 15-6-3-5-10V6z" fill="#f0306b"/></svg><span class="mt-[6px] h-[2px] w-10 bg-[#76b9ed]"></span></button>
  <button class="ml-px flex h-10 w-12 items-center justify-center" aria-label="Steam"><svg class="size-[22px]" viewBox="0 0 22 22"><circle cx="11" cy="11" r="11" fill="#14437f"/><path d="M0 9Q3 0 11 0t11 11q-2-6-8-6T0 9z" fill="#0b1d3e"/><circle cx="14.500" cy="8.500" r="3.500" fill="none" stroke="#fff" stroke-width="1.500"/><path d="M0 11l7 3 5-3" stroke="#e8edf3" stroke-width="3" fill="none"/><circle cx="7.500" cy="15" r="2.500" fill="#14437f" stroke="#fff" stroke-width="1.300"/></svg></button>
  <button class="ml-px flex h-10 w-12 items-center justify-center" aria-label="File Explorer"><svg class="h-[19px] w-[22px]" viewBox="0 0 22 19"><path d="M0 0h8l1.500 2H21v4H0z" fill="#e8b53a"/><path d="M0 3.500h22V18H0z" fill="#fde08a"/><path d="M4 10h14v9h-4v-4H8v4H4z" fill="#36b3e8"/></svg></button>
  <button class="ml-px flex h-10 w-12 items-center justify-center" aria-label="Python script"><svg class="size-[23px]" viewBox="0 0 23 23"><path d="M0 0h12l5 5v17H0z" fill="#ddd"/><path d="M2 3h8M2 5h9M2 7h8M2 9h9M2 11h6M2 13h5M2 15h6M2 17h7" stroke="#888"/><path d="M12 8h4q3 0 3 3v3h-6q-1 0-1 3H9q-2-7 3-7z" fill="#4079b3"/><path d="M19.500 11H21q3 6-1 8h-3v2q-5 3-5-2 0-4 4-4h3.500z" fill="#fcd34a"/></svg></button>
  <button class="ml-px flex h-10 w-12 flex-col items-center bg-[#3c403b]" aria-label="Fusion 360"><svg class="mt-2 size-6 shrink-0" viewBox="0 0 24 24"><path d="M0 0h24v24H0z" fill="#fbe0c8"/><path d="M6 3h13l-2 4h-6v3h6l-1 4h-4v5H8z" fill="#cc7424"/><path d="M6 3h5v6L8 19z" fill="#8a4a17"/><path d="M13 20.500h7" stroke="#e39455" stroke-width="2"/></svg><span class="mt-[6px] h-[2px] w-12 bg-[#76b9ed]"></span></button>

  <div class="ml-auto flex h-10 items-center">
    <button aria-label="People"><svg class="size-[15px]" viewBox="0 0 15 15"><circle cx="10.500" cy="3.500" r="2.800" fill="none" stroke="#fff" stroke-width="1.200"/><circle cx="4.500" cy="7.500" r="2.500" fill="none" stroke="#fff" stroke-width="1.200"/><path d="M.5 15q0-4.500 4-4.500t4 4.500M7.500 8.500q6.500-4 6.500 3" fill="none" stroke="#fff" stroke-width="1.200"/></svg></button>
    <button class="ml-[22px]" aria-label="Show hidden icons"><svg class="h-2 w-3" viewBox="0 0 12 8"><path d="M.5 7L6 1.500 11.500 7" fill="none" stroke="#fff" stroke-width="1.300"/></svg></button>
    <button class="ml-[10px]" aria-label="Network"><svg class="h-[14px] w-4" viewBox="0 0 16 14"><path d="M5.500 1.500h10v8h-12V6M9.500 9.500v3.500M6 13h7M.5.500h4v4h-4zM2.500 4.500V9h1" fill="none" stroke="#fff"/></svg></button>
    <button class="ml-2" aria-label="Volume"><svg class="h-[14px] w-4" viewBox="0 0 16 14"><path d="M.5 4.500h2l4-3.500v12l-4-3.500h-2z" fill="none" stroke="#fff"/><path d="M8.500 5q1.500 2 0 4" fill="none" stroke="#fff"/><path d="M10.500 3q3 4 0 8M13 1.500q4 5.500 0 11" fill="none" stroke="#888"/></svg></button>
    <button class="ml-[10px] w-[60px] text-center font-['Open_Sans',sans-serif] text-[11px] leading-[18px]"><time datetime="2018-08-12T18:57">6:57 PM<br>12/08/2018</time></button>
    <button class="ml-[17px]" aria-label="Notifications"><svg class="size-4" viewBox="0 0 16 16"><path d="M.5 1h15v11.500h-5L8 15l-2.500-2.500h-5z" fill="none" stroke="#fff" stroke-width="1.200"/></svg></button>
    <span class="ml-5 mr-1 h-10 w-px bg-[#555]"></span>
  </div>
</footer>

<script>
  // Tree rows: [level, chevron, bulb, icon, label]
  const rows = [
    [1, 'closed', '', 'gear', 'Document Settings'],
    [1, 'closed', '', 'folder', 'Named Views'],
    [1, 'closed', 'off', 'folder', 'Origin'],
    [1, 'closed', 'on', 'folder', 'Joints'],
    [1, 'closed', 'on', 'folder', 'Sketches'],
    [1, 'closed', 'on', 'folder', 'Construction'],
    [1, 'open', 'on', 'pinned', 'Main Fuselage v4:1'],
    [2, 'closed', 'off', 'folder', 'Origin'],
    [2, 'open', 'on', 'folder', 'Bodies'],
    [3, '', 'off', 'body', 'Middle Section Right'],
    [3, '', 'on', 'body', 'Tail'],
    [3, '', 'on', 'body', 'Main Body'],
    [3, '', 'on', 'body', 'Middle Section Left'],
    [1, 'closed', 'off', 'part', 'Left Arm:1'],
    [1, 'closed', 'off', 'part', 'Battery Tall v1:1'],
    [1, 'closed', 'off', 'part', 'Battery Cover:1'],
    [1, 'closed', 'on', 'part', 'Servo Small v2:1'],
    [1, 'closed', 'off', 'part', 'Front v1:1'],
    [1, 'closed', 'off', 'part', 'Servo Covers:1'],
    [1, 'closed', 'off', 'part', 'Right Arm (2):1'],
  ];
  const indent = { 1: 'pl-[33px]', 2: 'pl-[51px]', 3: 'pl-[69px]' };
  const root = `<li class="flex h-5 items-center gap-[7px] pl-[15px]">
      <button class="w-[14px]" aria-label="Collapse"><svg class="h-4 w-[14px]"><use href="#i-open"/></svg></button>
      <div class="flex h-5 w-[260px] items-center bg-[#f1f1f1] pl-[5px]">
        <svg class="h-4 w-3"><use href="#i-bulb-on"/></svg>
        <div class="ml-2 flex h-4 w-[210px] items-center bg-[#999] pl-[3px] font-bold text-white">
          <svg class="size-4"><use href="#i-asm"/></svg><span class="ml-[14px]">Final Concept - Micah Tritsch...</span>
        </div>
        <input type="radio" checked aria-label="Activate component" class="ml-1 size-[13px] appearance-none rounded-full border border-[#333] bg-[#333] shadow-[inset_0_0_0_3px_#f1f1f1]">
      </div></li>`;
  document.getElementById('tree').innerHTML = root + rows.map(([level, chev, bulb, icon, label]) => `
    <li class="flex h-5 items-center gap-[7px] ${indent[level]}">
      ${chev ? `<button class="w-[14px]" aria-label="Toggle ${label}"><svg class="h-4 w-[14px]"><use href="#i-${chev}"/></svg></button>` : '<span class="w-[14px]"></span>'}
      <div class="flex h-5 items-center bg-[#f1f1f1] pr-[7px] ${bulb ? 'pl-[5px]' : 'pl-[3px]'}">
        ${bulb ? `<svg class="mr-[11px] h-4 w-3"><use href="#i-bulb-${bulb}"/></svg>` : ''}
        <svg class="size-4"><use href="#i-${icon}"/></svg>
        <a href="#" class="ml-[14px] whitespace-nowrap">${label}</a>
      </div></li>`).join('');

  // Timeline features in order
  const features = ('combine combine sketch extrude tspline combine combine align sweep sketch sweep extrude pattern sweep cyl pattern ' +
    'cyl cyl sweep cyl cyl pattern cyl extrude mirror rigid joint pattern pattern sketch sketch split sketch split sketch fold ' +
    'sketch extrude combine mirror rigid joint pattern pattern pattern pattern pattern pattern sweep fillet sweep combine sketch extrude delete delete ' +
    'sketch split hole sketch plane hole combine sketch split combine combine sweep sweep sweep sketch split').split(' ');
  document.getElementById('timeline').innerHTML = features.map(f => `
    <li class="flex w-6 shrink-0 flex-col items-center">
      <button class="flex size-6 shrink-0 items-center justify-center ${f === 'joint' ? 'rounded-sm bg-[#e6e81f]' : ''}" aria-label="${f}"><svg class="size-4"><use href="#i-${f}"/></svg></button>
      <span class="h-1 w-[2px] bg-[#cbcbcb]"></span><span class="h-[2px] w-full bg-[#cbcbcb]"></span>
    </li>`).join('');
</script>
</body>
</html>
